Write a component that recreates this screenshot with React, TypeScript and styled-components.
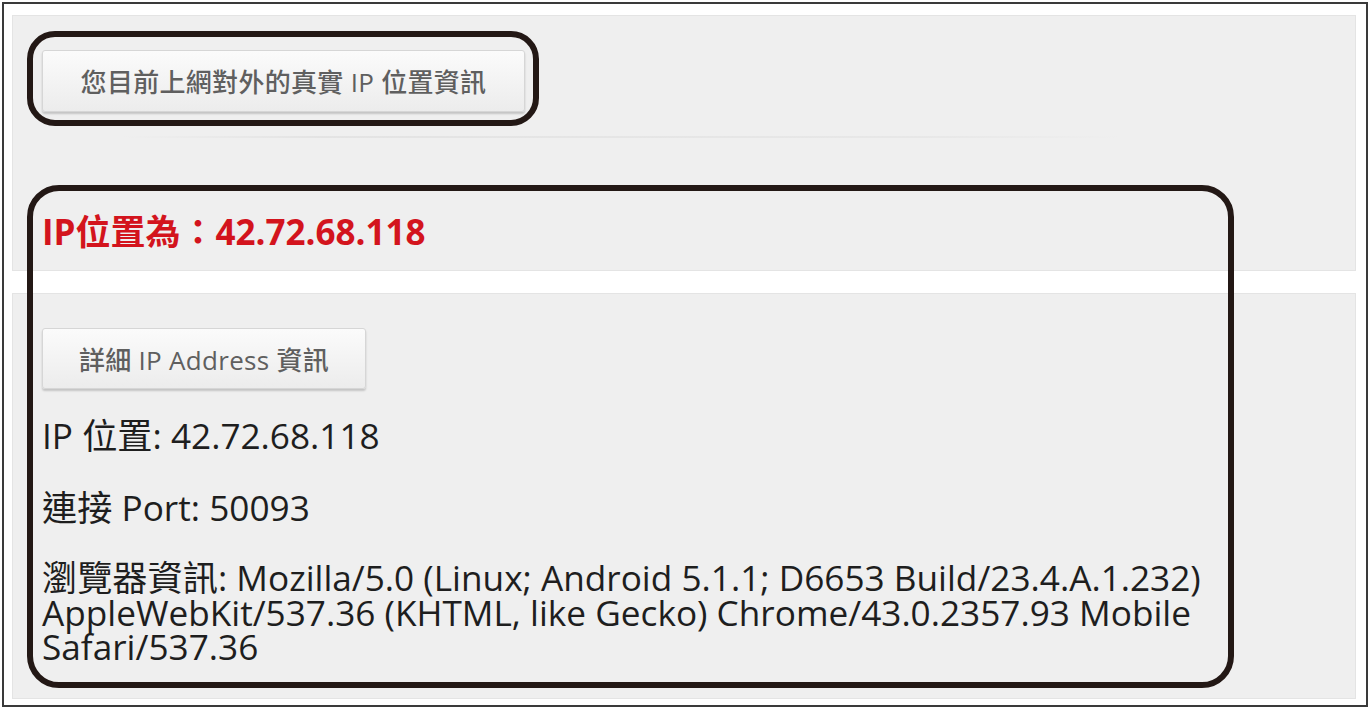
import React from "react";
import styled, { createGlobalStyle } from "styled-components";

const GlobalStyle = createGlobalStyle`
    html, body {
        margin: 0;
        padding: 0;
        background: #ffffff;
    }
    body {
        font-family: "Open Sans", "Noto Sans CJK TC", sans-serif;
    }
`;

function App() {
    return (
        <>
            <GlobalStyle />
            <Frame>
                <Panel $height={256}>
                    <GrayButton $width={483} $height={62}>
                        您目前上網對外的真實 IP 位置資訊
                    </GrayButton>
                    <FadedRow />
                    <IpHeadline>IP位置為：42.72.68.118</IpHeadline>
                </Panel>
                <Panel $height={406} $top={22}>
                    <GrayButton $width={324} $height={61}>
                        詳細 IP Address 資訊
                    </GrayButton>
                    <InfoLine $gap={29}>IP 位置: 42.72.68.118</InfoLine>
                    <InfoLine $gap={37}>連接 Port: 50093</InfoLine>
                    <InfoLine $gap={36}>
                        瀏覽器資訊: Mozilla/5.0 (Linux; Android 5.1.1; D6653 Build/23.4.A.1.232)
                        AppleWebKit/537.36 (KHTML, like Gecko) Chrome/43.0.2357.93 Mobile
                        Safari/537.36
                    </InfoLine>
                </Panel>
                <Callout $left={23} $top={27} $width={512} $height={95} $radius={28} />
                <Callout $left={23} $top={181} $width={1207} $height={503} $radius={32} />
            </Frame>
        </>
    );
}

const Frame = styled.div`
    position: relative;
    box-sizing: border-box;
    width: 1366px;
    height: 705px;
    margin: 2px 0 0 2px;
    padding: 11px 10px 0 8px;
    border: 2px solid #3a3a3a;
    background: #ffffff;
`;

const Panel = styled.div<{ $height: number; $top?: number }>`
    box-sizing: border-box;
    height: ${(p) => p.$height}px;
    margin-top: ${(p) => p.$top ?? 0}px;
    padding: 34px 20px 0 29px;
    display: flex;
    flex-direction: column;
    align-items: flex-start;
    background: #efefef;
    border: 1px solid #e4e4e4;
`;

const GrayButton = styled.div<{ $width: number; $height: number }>`
    box-sizing: border-box;
    width: ${(p) => p.$width}px;
    height: ${(p) => p.$height}px;
    display: flex;
    align-items: center;
    justify-content: center;
    border: 1px solid #d6d6d6;
    border-radius: 3px;
    background: linear-gradient(#fbfbfb, #ececec);
    box-shadow: 0 2px 2px rgba(0, 0, 0, 0.18);
    color: #5f5f5f;
    font-size: 26px;
    font-weight: 500;
    letter-spacing: 0.3px;
`;

const FadedRow = styled.div`
    width: 1000px;
    height: 2px;
    margin: 24px 0 0 80px;
    background: linear-gradient(
        90deg,
        transparent,
        rgba(200, 200, 200, 0.3) 20%,
        rgba(200, 200, 200, 0.2) 80%,
        transparent
    );
`;

const IpHeadline = styled.div`
    margin-top: 74px;
    color: #d3141d;
    font-size: 35px;
    font-weight: 700;
    line-height: 40px;
`;

const InfoLine = styled.div<{ $gap: number }>`
    margin-top: ${(p) => p.$gap}px;
    max-width: 1185px;
    color: #1e1e1e;
    font-size: 35.2px;
    line-height: 34.5px;
`;

const Callout = styled.div<{
    $left: number;
    $top: number;
    $width: number;
    $height: number;
    $radius: number;
}>`
    position: absolute;
    left: ${(p) => p.$left}px;
    top: ${(p) => p.$top}px;
    width: ${(p) => p.$width}px;
    height: ${(p) => p.$height}px;
    box-sizing: border-box;
    border: 6px solid #231815;
    border-radius: ${(p) => p.$radius}px;
    pointer-events: none;
`;

export default App;
